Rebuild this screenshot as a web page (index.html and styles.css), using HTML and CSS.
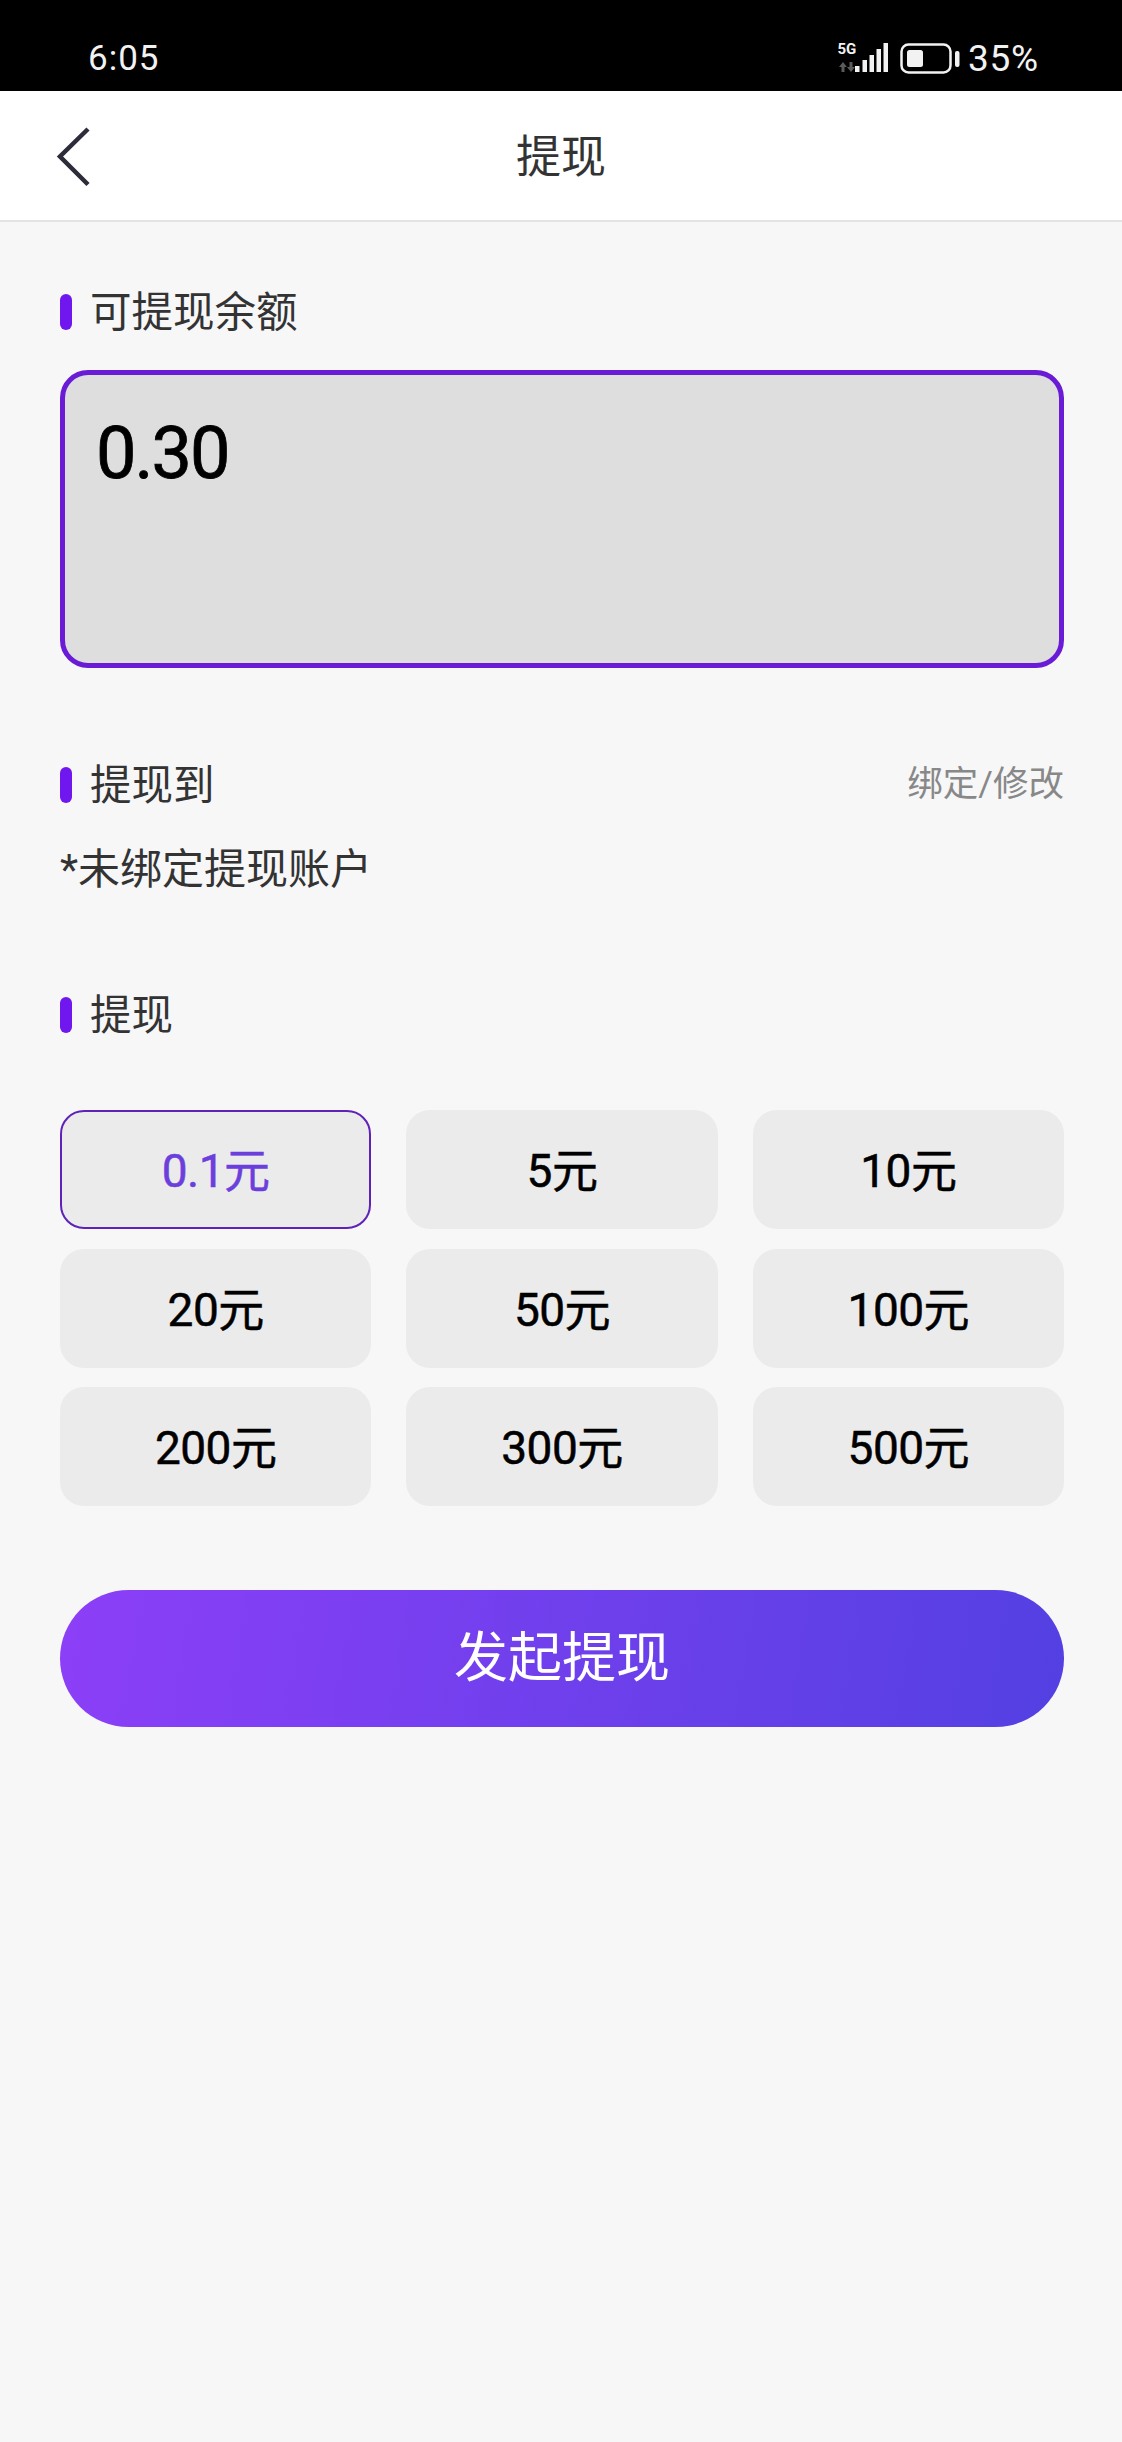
FILE: index.html
```html
<!DOCTYPE html>
<html lang="zh-CN">

<head>
    <meta charset="UTF-8">
    <meta name="viewport" content="width=device-width, initial-scale=1.0">
    <title>提现</title>
    <link rel="stylesheet" href="styles.css">
</head>

<body>
    <!-- Status bar -->
    <div class="status-bar">
        <span class="status-time">6:05</span>
        <div class="status-right">
            <div class="net">
                <span class="net-label">5G</span>
                <svg class="net-arrows" width="16" height="10" viewBox="0 0 16 10">
                    <path d="M4 0L0 5H2.500V10H5.500V5H8ZM12 10L16 5H13.500V0H10.500V5H8Z" fill="#5a5a5a"/>
                </svg>
            </div>
            <svg class="signal" width="33" height="30" viewBox="0 0 33 30">
                <rect x="0" y="23" width="4.500" height="6" fill="#f2f2f2"/>
                <rect x="7.500" y="17" width="4.500" height="12" fill="#f2f2f2"/>
                <rect x="14.500" y="12" width="4.500" height="17" fill="#f2f2f2"/>
                <rect x="21.500" y="6" width="4.500" height="23" fill="#f2f2f2"/>
                <rect x="28.500" y="0" width="4.500" height="29" fill="#f2f2f2"/>
            </svg>
            <svg class="battery" width="60" height="32" viewBox="0 0 60 32">
                <rect x="1.500" y="1.500" width="49" height="28" rx="7" fill="none" stroke="#f2f2f2" stroke-width="2.500"/>
                <rect x="7" y="7" width="16" height="17" rx="2.500" fill="#f2f2f2"/>
                <rect x="55" y="8" width="4.500" height="16" rx="2" fill="#f2f2f2"/>
            </svg>
            <span class="status-percent">35%</span>
        </div>
    </div>

    <!-- Header -->
    <header class="top-bar">
        <svg class="back-icon" width="34" height="60" viewBox="0 0 34 60">
            <path d="M32 2L4 29.500L32 57.500" fill="none" stroke="#2c2c3a" stroke-width="4.500"/>
        </svg>
        <h1 class="page-title">提现</h1>
    </header>

    <main class="content">
        <div class="section-head balance-head">
            <span class="mark"></span>
            <span class="section-title">可提现余额</span>
        </div>
        <div class="balance-box">0.30</div>

        <div class="section-head account-head">
            <span class="mark"></span>
            <span class="section-title">提现到</span>
            <a class="bind-link" href="#">绑定/修改</a>
        </div>
        <p class="account-note">*未绑定提现账户</p>

        <div class="section-head amount-head">
            <span class="mark"></span>
            <span class="section-title">提现</span>
        </div>

        <div class="amount-grid">
            <div class="amount-item active">0.1元</div>
            <div class="amount-item">5元</div>
            <div class="amount-item">10元</div>
            <div class="amount-item">20元</div>
            <div class="amount-item">50元</div>
            <div class="amount-item">100元</div>
            <div class="amount-item">200元</div>
            <div class="amount-item">300元</div>
            <div class="amount-item">500元</div>
        </div>

        <button class="submit-btn" type="button">发起提现</button>
    </main>
</body>

</html>
```

FILE: styles.css
```css
* {
    box-sizing: border-box;
}

body {
    margin: 0;
    min-height: 2442px;
    background-color: #f7f7f8;
    font-family: Roboto, "Noto Sans CJK SC", sans-serif;
    color: #333;
}

.status-bar {
    height: 91px;
    background-color: #000;
    color: #f2f2f2;
    display: flex;
    justify-content: space-between;
    padding: 38px 83px 0 88px;
}

.status-time {
    font-size: 35px;
    line-height: 41px;
    letter-spacing: 1px;
}

.status-right {
    display: flex;
    align-items: flex-start;
    margin-top: 5px;
}

.net {
    width: 18px;
    display: flex;
    flex-direction: column;
    align-items: center;
}

.net-label {
    font-size: 15px;
    line-height: 14px;
    font-weight: 700;
    height: 20px;
    margin-top: -1px;
}

.net-arrows {
    display: block;
}

.signal {
    display: block;
    margin-left: -1px;
}

.battery {
    display: block;
    margin-left: 12px;
}

.status-percent {
    font-size: 37px;
    line-height: 32px;
    margin-left: 8px;
    letter-spacing: 0.800px;
}

.top-bar {
    height: 131px;
    background-color: #fff;
    border-bottom: 2px solid #e4e4e4;
    display: flex;
    align-items: center;
    justify-content: center;
    position: relative;
}

.back-icon {
    position: absolute;
    left: 56px;
    top: 36px;
}

.page-title {
    margin: 0 0 4px;
    font-size: 45px;
    font-weight: 400;
    color: #333;
}

.content {
    padding: 0 58px 0 60px;
}

.section-head {
    display: flex;
    align-items: center;
    height: 48px;
}

.balance-head {
    margin-top: 66px;
}

.account-head {
    margin-top: 93px;
}

.amount-head {
    margin-top: 97px;
}

.mark {
    width: 12px;
    height: 36px;
    border-radius: 6px;
    background-color: #6f17ee;
    margin-right: 18px;
}

.section-title {
    font-size: 41.500px;
    line-height: 48px;
    padding-top: 2px;
    color: #333;
}

.bind-link {
    margin-left: auto;
    font-size: 35.500px;
    line-height: 44px;
    margin-top: -2px;
    color: #888;
    text-decoration: none;
}

.balance-box {
    height: 298px;
    margin-top: 34px;
    padding: 36px 0 0 31px;
    background-color: #dedede;
    border: 5px solid #6a1bd6;
    border-radius: 28px;
    font-size: 72px;
    line-height: 86px;
    letter-spacing: -2px;
    -webkit-text-stroke: 0.800px #000;
    color: #000;
}

.account-note {
    margin: 37px 0 0;
    font-size: 42px;
    line-height: 48px;
    color: #333;
}

.amount-grid {
    display: grid;
    grid-template-columns: repeat(3, 1fr);
    grid-auto-rows: 119px;
    column-gap: 35px;
    row-gap: 19.500px;
    margin-top: 71px;
}

.amount-item {
    display: flex;
    align-items: center;
    justify-content: center;
    padding-bottom: 5px;
    background-color: #ebebeb;
    border-radius: 24px;
    font-size: 46px;
    letter-spacing: -0.500px;
    -webkit-text-stroke: 0.500px currentColor;
    color: #000;
}

.amount-item.active {
    border: 2px solid #5f22b8;
    color: #6c3fdd;
}

.submit-btn {
    display: block;
    width: 100%;
    height: 137px;
    margin-top: 84px;
    padding-bottom: 12px;
    border: none;
    border-radius: 69px;
    background: linear-gradient(100deg, #8c3ff7 0%, #5340e2 100%);
    color: #fff;
    font-family: inherit;
    font-size: 54px;
}
```
